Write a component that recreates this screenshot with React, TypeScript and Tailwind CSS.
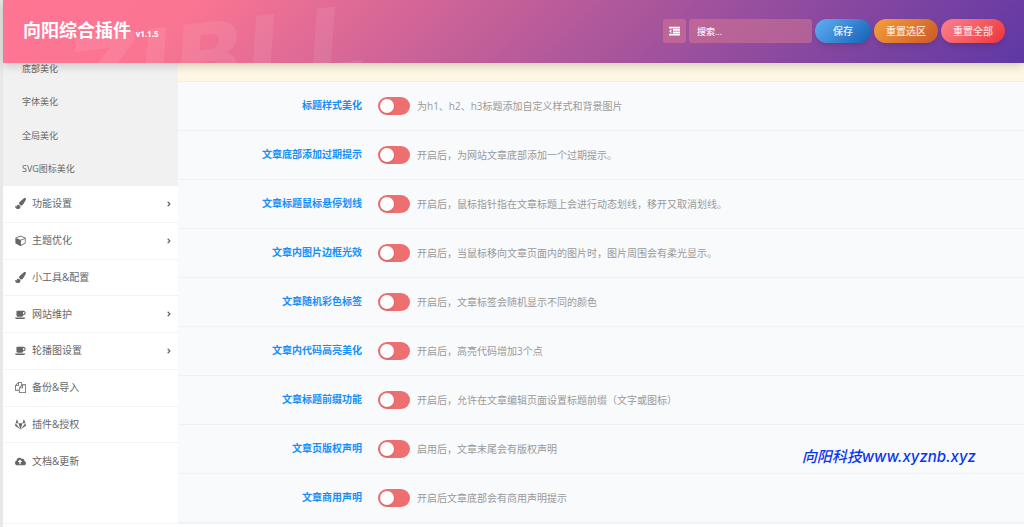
import type { ComponentType } from "react";
import { FaAngleRight, FaCloudUploadAlt, FaGitlab, FaPaintBrush } from "react-icons/fa";

interface IconProps {
  className?: string;
}

interface MenuItem {
  icon: ComponentType<IconProps>;
  label: string;
  arrow?: boolean;
}

interface Option {
  title: string;
  desc: string;
}

function DedentIcon({ className }: IconProps) {
  return (
    <svg viewBox="0 0 1792 1792" fill="currentColor" className={className} aria-hidden="true">
      <path d="M384 544v576q0 13-9.500 22.500t-22.500 9.500q-14 0-23-9l-288-288q-9-9-9-23t9-23l288-288q9-9 23-9 13 0 22.500 9.500t9.500 22.500z" />
      <path d="M32 1264h1728q32 0 32 32v224q0 32-32 32h-1728q-32 0-32-32v-224q0-32 32-32zM672 880h1088q32 0 32 32v224q0 32-32 32h-1088q-32 0-32-32v-224q0-32 32-32zM672 496h1088q32 0 32 32v224q0 32-32 32h-1088q-32 0-32-32v-224q0-32 32-32zM32 112h1728q32 0 32 32v224q0 32-32 32h-1728q-32 0-32-32v-224q0-32 32-32z" />
    </svg>
  );
}

function CubeIcon({ className }: IconProps) {
  return (
    <svg viewBox="0 0 1664 1792" fill="currentColor" className={className} aria-hidden="true">
      <path d="M896 1629l640-349v-636l-640 233v752zm-64-865l698-254-698-254-698 254zm832-252v768q0 35-18 65t-49 47l-704 384q-28 16-61 16t-61-16l-704-384q-31-17-49-47t-18-65v-768q0-40 23-73t61-47l704-256q22-8 44-8t44 8l704 256q38 14 61 47t23 73z" />
    </svg>
  );
}

function CoffeeIcon({ className }: IconProps) {
  return (
    <svg viewBox="0 0 1920 1792" fill="currentColor" className={className} aria-hidden="true">
      <path d="M1664 640q0-80-56-136t-136-56h-64v384h64q80 0 136-56t56-136zm-1664 768h1792q0 106-75 181t-181 75h-1280q-106 0-181-75t-75-181zm1856-768q0 159-112.500 271.500t-271.500 112.500h-64v32q0 92-66 158t-158 66h-704q-92 0-158-66t-66-158v-736q0-26 19-45t45-19h1152q159 0 271.500 112.500t112.500 271.500z" />
    </svg>
  );
}

function FilesIcon({ className }: IconProps) {
  return (
    <svg viewBox="0 0 1792 1792" fill="currentColor" className={className} aria-hidden="true">
      <path d="M1696 384q40 0 68 28t28 68v1216q0 40-28 68t-68 28h-960q-40 0-68-28t-28-68v-288h-544q-40 0-68-28t-28-68v-672q0-40 20-88t48-76l408-408q28-28 76-48t88-20h416q40 0 68 28t28 68v328q68-40 128-40h416zm-544 213l-299 299h299v-299zm-640-384l-299 299h299v-299zm196 647l316-316v-416h-384v416q0 40-28 68t-68 28h-416v640h512v-256q0-40 20-88t48-76zm956 804v-1152h-384v416q0 40-28 68t-68 28h-416v640h896z" />
    </svg>
  );
}

const subItems = ["底部美化", "字体美化", "全局美化", "SVG图标美化"];

const menuItems: MenuItem[] = [
  { icon: FaPaintBrush, label: "功能设置", arrow: true },
  { icon: CubeIcon, label: "主题优化", arrow: true },
  { icon: FaPaintBrush, label: "小工具&配置" },
  { icon: CoffeeIcon, label: "网站维护", arrow: true },
  { icon: CoffeeIcon, label: "轮播图设置", arrow: true },
  { icon: FilesIcon, label: "备份&导入" },
  { icon: FaGitlab, label: "插件&授权" },
  { icon: FaCloudUploadAlt, label: "文档&更新" },
];

const options: Option[] = [
  { title: "标题样式美化", desc: "为h1、h2、h3标题添加自定义样式和背景图片" },
  { title: "文章底部添加过期提示", desc: "开启后，为网站文章底部添加一个过期提示。" },
  { title: "文章标题鼠标悬停划线", desc: "开启后，鼠标指针指在文章标题上会进行动态划线，移开又取消划线。" },
  { title: "文章内图片边框光效", desc: "开启后，当鼠标移向文章页面内的图片时，图片周围会有柔光显示。" },
  { title: "文章随机彩色标签", desc: "开启后，文章标签会随机显示不同的颜色" },
  { title: "文章内代码高亮美化", desc: "开启后，高亮代码增加3个点" },
  { title: "文章标题前缀功能", desc: "开启后，允许在文章编辑页面设置标题前缀（文字或图标）" },
  { title: "文章页版权声明", desc: "启用后，文章末尾会有版权声明" },
  { title: "文章商用声明", desc: "开启后文章底部会有商用声明提示" },
];

function Header() {
  return (
    <header className="relative z-10 flex h-[63px] items-center justify-between bg-[linear-gradient(135deg,#ff7593_0%,#fa7592_18%,#5f38a5_100%)] pr-[19px] pb-px pl-5 text-white shadow-[0_2px_10px_rgba(0,0,0,0.2)]">
      <div className="absolute inset-0 overflow-hidden" aria-hidden="true">
        <div className="absolute top-3 left-16 -rotate-7 font-['DejaVu_Sans'] text-[96px] leading-[92px] font-bold text-white/8 italic select-none">
          ZIBLL
        </div>
      </div>
      <h1 className="relative pt-0.5 text-lg leading-6 font-bold">
        向阳综合插件 <small className="text-[8px]">v1.1.5</small>
      </h1>
      <form className="relative flex items-center gap-[3px]" onSubmit={(e) => e.preventDefault()}>
        <button
          type="button"
          aria-label="展开全部"
          className="grid h-6 w-[23px] place-items-center rounded-[3px] bg-[#d9798f]/50"
        >
          <DedentIcon className="size-[11px]" />
        </button>
        <input
          type="text"
          aria-label="搜索"
          placeholder="搜索..."
          className="h-6 w-[123px] rounded-[3px] bg-[#d9798f]/50 px-2 text-[9px] font-medium placeholder:text-white/90 focus:outline-none"
        />
        <button
          type="submit"
          className="h-6 w-14 rounded-full bg-linear-135 from-[#60b0f4] to-[#1260b4] pt-px text-[10px] font-medium text-white/90 shadow-md"
        >
          保存
        </button>
        <button
          type="button"
          className="h-6 w-16 rounded-full bg-linear-135 from-[#f4a03a] to-[#cb5729] pt-px text-[10px] font-medium text-white/80 shadow-md"
        >
          重置选区
        </button>
        <button
          type="button"
          className="h-6 w-16 rounded-full bg-linear-135 from-[#fb7f8b] to-[#ed2f3b] pt-px text-[10px] font-medium text-white/80 shadow-md"
        >
          重置全部
        </button>
      </form>
    </header>
  );
}

function Sidebar() {
  return (
    <nav className="w-[175px] shrink-0 bg-white text-[#666]">
      <ul className="-mt-[11px] flex h-[134px] flex-col bg-[#f1f1f1]">
        {subItems.map((label) => (
          <li key={label} className="flex-1">
            <a href="#" className="flex h-full items-center px-[19px] pb-px text-[9px]">
              {label}
            </a>
          </li>
        ))}
      </ul>
      <ul className="flex h-[293px] flex-col">
        {menuItems.map(({ icon: Glyph, label, arrow }) => (
          <li key={label} className="flex-1 border-b border-[#f3f3f3] last:border-b-0">
            <a href="#" className="flex h-full items-center px-3 text-[10px]">
              <Glyph className="mr-[6px] size-[11px]" />
              {label}
              {arrow && <FaAngleRight className="-mr-[7px] ml-auto size-2" />}
            </a>
          </li>
        ))}
      </ul>
    </nav>
  );
}

function OptionRow({ title, desc }: Option) {
  return (
    <label className="flex h-[49px] items-center border-b border-[#eff1f3]">
      <span className="w-[184px] shrink-0 pb-0.5 text-right font-bold text-[#1790f7]">{title}</span>
      <span className="relative ml-4 h-[18px] w-8 shrink-0">
        <input
          type="checkbox"
          className="peer h-full w-full appearance-none rounded-full bg-[#ee6f70] checked:bg-[#4fb845]"
        />
        <span className="pointer-events-none absolute top-[2px] left-[2px] size-[14px] rounded-full bg-white shadow-sm peer-checked:left-4" />
      </span>
      <span className="ml-[7px] text-[#999]">{desc}</span>
    </label>
  );
}

export default function App() {
  return (
    <div className="min-h-screen bg-[#e8e8e8] pl-[3px] font-['Open_Sans','Noto_Sans_CJK_SC',sans-serif]">
      <div className="relative bg-white">
        <Header />
        <div className="flex">
          <Sidebar />
          <main className="min-w-0 flex-1 bg-[#f9fafc] text-[10px]">
            <div className="h-[19px] border-b border-[#f6eedb] bg-[#fef7e3]" />
            {options.map((option) => (
              <OptionRow key={option.title} {...option} />
            ))}
          </main>
        </div>
        <div className="h-1 border-t border-[#f3f3f3]" />
        <div className="pointer-events-none absolute right-12 bottom-[58px] font-['Inter','Noto_Sans_CJK_SC',sans-serif] text-[15px] leading-6 font-medium text-[#0a35f0] italic">
          向阳科技www.xyznb.xyz
        </div>
      </div>
    </div>
  );
}
